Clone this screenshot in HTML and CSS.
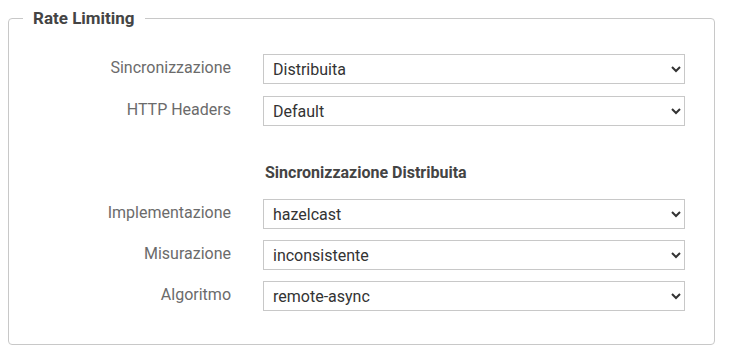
FILE: index.html
```html
<!DOCTYPE html>
<html lang="it">
<head>
  <meta charset="UTF-8">
  <title>Rate Limiting</title>
  <link rel="stylesheet" href="styles.css">
</head>
<body>
  <fieldset class="box">
    <legend>Rate Limiting</legend>

    <div class="row">
      <label for="sync">Sincronizzazione</label>
      <select id="sync"><option>Distribuita</option><option>Locale</option></select>
    </div>
    <div class="row">
      <label for="headers">HTTP Headers</label>
      <select id="headers"><option>Default</option></select>
    </div>

    <div class="row section">
      <span></span>
      <h4>Sincronizzazione Distribuita</h4>
    </div>

    <div class="row">
      <label for="impl">Implementazione</label>
      <select id="impl"><option>hazelcast</option></select>
    </div>
    <div class="row">
      <label for="misura">Misurazione</label>
      <select id="misura"><option>inconsistente</option></select>
    </div>
    <div class="row">
      <label for="algo">Algoritmo</label>
      <select id="algo"><option>remote-async</option></select>
    </div>
  </fieldset>
</body>
</html>
```

FILE: styles.css
```css
body {
  margin: 8px;
  font-family: Roboto, 'Liberation Sans', sans-serif;
  background: #fff;
  color: #333;
}

.box {
  width: 707px;
  box-sizing: border-box;
  margin: 0;
  border: 1px solid #c8c8c8;
  border-radius: 4px;
  padding: 26px 29px 33px 22px;
}

legend {
  font-size: 17px;
  font-weight: bold;
  color: #444;
  padding: 0 10px;
  margin-left: -8px;
}

.row {
  display: grid;
  grid-template-columns: 200px 422px;
  column-gap: 32px;
  margin-bottom: 11px;
}

.row:first-of-type {
  margin-bottom: 12px;
}

.row:last-child {
  margin-bottom: 0;
}

label {
  text-align: right;
  font-size: 16px;
  color: #6b6b6b;
  padding-top: 4px;
}

select {
  height: 30px;
  border: 1px solid #c8c8c8;
  border-radius: 0;
  background: #fff;
  font-family: Roboto, 'Liberation Sans', sans-serif;
  font-size: 16px;
  color: #333;
  padding: 0 5px;
}

.section {
  margin: 37px 0 17px;
}

h4 {
  margin: 0;
  padding-left: 2px;
  font-size: 16px;
  font-weight: bold;
  color: #444;
}
```
